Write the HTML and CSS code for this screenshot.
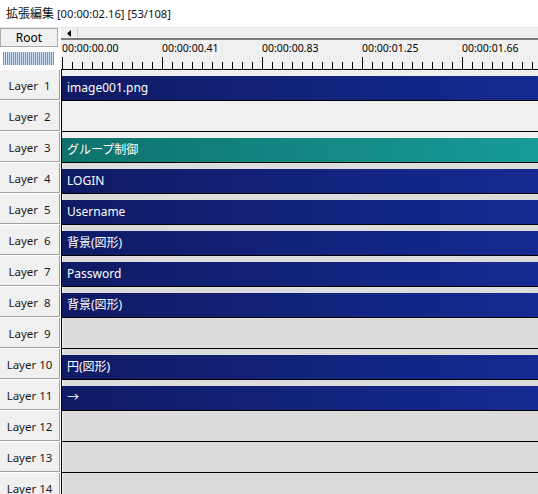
FILE: index.html
```html
<!DOCTYPE html>
<html>
<head>
<meta charset="utf-8">
<link rel="stylesheet" href="styles.css">
</head>
<body>
<div class="title">拡張編集<span class="title-info"> [00:00:02.16] [53/108]</span></div>
<div class="main">
  <div class="side">
    <div class="side-head">
      <div class="root">Root</div>
      <div class="zoom-ticks"></div>
    </div>
    <div class="label"><div class="cell">Layer  1</div></div>
    <div class="label"><div class="cell">Layer  2</div></div>
    <div class="label"><div class="cell">Layer  3</div></div>
    <div class="label"><div class="cell">Layer  4</div></div>
    <div class="label"><div class="cell">Layer  5</div></div>
    <div class="label"><div class="cell">Layer  6</div></div>
    <div class="label"><div class="cell">Layer  7</div></div>
    <div class="label"><div class="cell">Layer  8</div></div>
    <div class="label"><div class="cell">Layer  9</div></div>
    <div class="label"><div class="cell">Layer 10</div></div>
    <div class="label"><div class="cell">Layer 11</div></div>
    <div class="label"><div class="cell">Layer 12</div></div>
    <div class="label"><div class="cell">Layer 13</div></div>
    <div class="label"><div class="cell">Layer 14</div></div>
  </div>
  <div class="timeline">
    <div class="scroll">
      <div class="arrow-btn"><svg width="4" height="7" viewBox="0 0 4 7"><path d="M4 0 L0 3.5 L4 7 Z" fill="#000"/></svg></div>
      <div class="track"></div>
    </div>
    <div class="ruler">
      <div class="labels">
        <span class="tl">00:00:00.00</span>
        <span class="tl">00:00:00.41</span>
        <span class="tl">00:00:00.83</span>
        <span class="tl">00:00:01.25</span>
        <span class="tl">00:00:01.66</span>
      </div>
      <div class="ticks"></div>
    </div>
    <div class="row light"><div class="bar blue">image001.png</div></div>
    <div class="row light"></div>
    <div class="row light"><div class="bar teal">グループ制御</div></div>
    <div class="row"><div class="bar blue">LOGIN</div></div>
    <div class="row"><div class="bar blue">Username</div></div>
    <div class="row"><div class="bar blue">背景(図形)</div></div>
    <div class="row"><div class="bar blue">Password</div></div>
    <div class="row"><div class="bar blue">背景(図形)</div></div>
    <div class="row"></div>
    <div class="row"><div class="bar blue">円(図形)</div></div>
    <div class="row"><div class="bar blue">→</div></div>
    <div class="row"></div>
    <div class="row"></div>
    <div class="row"></div>
  </div>
</div>
</body>
</html>
```
FILE: styles.css
```css
html, body {
  margin: 0;
  padding: 0;
  background: #fff;
  overflow: hidden;
  width: 538px;
  height: 494px;
  font-family: "Noto Sans", "Noto Sans CJK JP", sans-serif;
  color: #000;
}

.title {
  height: 28px;
  box-sizing: border-box;
  padding-left: 6px;
  font-size: 12px;
  line-height: 28px;
  border-bottom: 1px solid #e3e3e3;
  color: #111;
}

.title-info {
  font-size: 11.2px;
}

.main {
  display: flex;
  align-items: flex-start;
}

.side {
  width: 61px;
  flex: none;
  background: #fff;
}

.side-head {
  height: 41px;
}

.root {
  width: 58px;
  height: 19px;
  box-sizing: border-box;
  background: #f0f0f0;
  border: 1px solid #a9a9a9;
  font-size: 12px;
  line-height: 17px;
  text-align: center;
}

.zoom-ticks {
  margin: 5px 0 0 3px;
  width: 51px;
  height: 13px;
  background: repeating-linear-gradient(to right, #5f98e0 0 1px, #cfe0f4 1px 2px);
}

.label {
  height: 31px;
  padding-top: 1px;
  box-sizing: border-box;
}

.cell {
  width: 60px;
  height: 30px;
  box-sizing: border-box;
  padding-top: 4px;
  background: #f0f0f0;
  border-right: 1px solid #a0a0a0;
  border-bottom: 1px solid #a0a0a0;
  font-size: 11.5px;
  line-height: 24px;
  text-align: center;
  white-space: pre;
  color: #1a1a1a;
}

.timeline {
  flex: 1;
  min-width: 0;
}

.scroll {
  display: flex;
  height: 12px;
  box-sizing: border-box;
  background: #f0f0f0;
  border-bottom: 2px solid #7d7d7d;
}

.arrow-btn {
  width: 17px;
  height: 10px;
  box-sizing: border-box;
  border-right: 1px solid #c8c8c8;
  display: flex;
  align-items: center;
  justify-content: center;
}

.track {
  flex: 1;
}

.ruler {
  height: 29px;
  background: #f0f0f0;
}

.labels {
  display: flex;
  padding-left: 1px;
  height: 17px;
}

.tl {
  width: 100px;
  flex: none;
  font-size: 10.5px;
  line-height: 17px;
  white-space: nowrap;
}

.ticks {
  height: 12px;
  margin-left: 1px;
  background:
    repeating-linear-gradient(to right, #000 0 1px, transparent 1px 100px) 0 0 / 100% 12px no-repeat,
    repeating-linear-gradient(to right, #000 0 1px, transparent 1px 10px) 0 5px / 100% 7px no-repeat;
}

.row {
  height: 31px;
  box-sizing: border-box;
  border-top: 1px solid #000;
  border-left: 1px solid #000;
  padding-top: 6px;
  background: linear-gradient(to right, #f4f4f4 0 1px, #dcdcdc 1px);
}

.row.light {
  background: #f0f0f0;
}

.bar {
  height: 24px;
  box-sizing: border-box;
  padding-left: 5px;
  font-size: 12px;
  line-height: 24px;
  color: #fff;
  white-space: nowrap;
}

.bar.blue {
  background: linear-gradient(to right, #101b64, #152a92);
}

.bar.teal {
  background: linear-gradient(to right, #0e726b, #189b99);
}
```
